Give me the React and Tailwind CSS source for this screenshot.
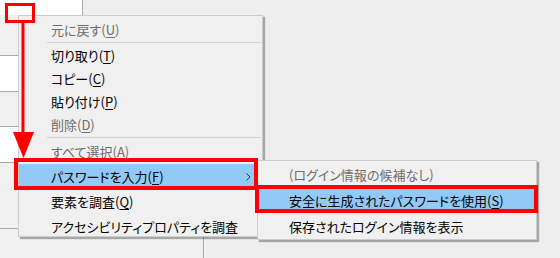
import React from "react";

const Item = ({ children, disabled, tall, active }) => (
  <div
    className={
      (tall ? "h-[25px] " : "h-[23px] ") +
      (active ? "bg-[#91c9f7] " : "") +
      (disabled ? "text-[#6d6d6d] " : "text-black ") +
      "flex items-center pl-[32px] pr-[10px] whitespace-nowrap"
    }
  >
    {children}
  </div>
);

const SubItem = ({ children, disabled, active }) => (
  <div
    className={
      (active ? "bg-[#91c9f7] " : "") +
      (disabled ? "text-[#6d6d6d] " : "text-black ") +
      "h-[26px] flex items-center pl-[31px] whitespace-nowrap"
    }
  >
    {children}
  </div>
);

const Sep = () => (
  <div className="h-[3px] flex items-center pl-[28px] pr-[1px]">
    <div className="h-px w-full bg-[#d2d2d2]" />
  </div>
);

const U = ({ children }) => <span className="underline underline-offset-2">{children}</span>;

export default function App() {
  return (
    <div className="relative w-[560px] h-[258px] overflow-hidden bg-[#eeeeee] font-['Noto_Sans_CJK_JP','Noto_Sans',sans-serif] text-[13px] leading-none [font-feature-settings:'palt']">
      {/* page background */}
      <div className="flex flex-col">
        <div className="flex h-[228px]">
          <div className="w-[83px] border-r border-[#a8a8a8] flex flex-col">
            <div className="h-[15px] bg-white" />
            <div className="h-[41px] bg-[#f0f0f0] border-b border-[#a8a8a8]" />
            <div className="h-[36px] bg-white border-b border-[#a8a8a8]" />
            <div className="h-[35px] bg-[#f0f0f0] border-b border-[#a8a8a8]" />
            <div className="h-[36px] bg-white border-b border-[#a8a8a8]" />
            <div className="flex-1 bg-[#f0f0f0]" />
          </div>
          <div className="flex-1" />
        </div>
        <div className="flex">
          <div className="w-[204px] h-[30px] border-t border-r border-[#a8a8a8] bg-[#f0f0f0]" />
        </div>
      </div>

      {/* main context menu */}
      <div className="absolute left-[18px] top-[15px] w-[245px] h-[222px] bg-[#f0f0f0] border border-[#cccccc] shadow-[2px_2px_1px_rgba(0,0,0,0.3)] pt-[2px]">
        <Item disabled>元に戻す(<U>U</U>)</Item>
        <Sep />
        <Item>切り取り(<U>T</U>)</Item>
        <Item>コピー(<U>C</U>)</Item>
        <Item>貼り付け(<U>P</U>)</Item>
        <Item disabled>削除(<U>D</U>)</Item>
        <Sep />
        <Item disabled tall>すべて選択(<U>A</U>)</Item>
        <div className="relative">
          <Item tall active>パスワードを入力(<U>F</U>)</Item>
          <svg className="absolute left-[227px] top-[9px]" width="5" height="8" viewBox="0 0 5 8">
            <polyline points="0.5,0.5 4,4 0.5,7.5" fill="none" stroke="#333333" strokeWidth="1" />
          </svg>
        </div>
        <Item tall>要素を調査(<U>Q</U>)</Item>
        <Item tall>アクセシビリティプロパティを調査</Item>
      </div>

      {/* submenu */}
      <div className="absolute left-[257px] top-[160px] w-[280px] h-[80px] bg-[#f0f0f0] border border-[#cccccc] shadow-[2px_2px_1px_rgba(0,0,0,0.3)]">
        <SubItem disabled>(ログイン情報の候補なし)</SubItem>
        <SubItem active>安全に生成されたパスワードを使用(<U>S</U>)</SubItem>
        <SubItem>保存されたログイン情報を表示</SubItem>
      </div>

      {/* annotations */}
      <div className="absolute left-[14px] top-[158px] w-[244px] h-[32px] border-4 border-[#ff0000]" />
      <div className="absolute left-[255px] top-[185px] w-[283px] h-[28px] border-4 border-[#ff0000]" />
      <svg className="absolute left-0 top-0" width="40" height="160" viewBox="0 0 40 160">
        <rect x="6.5" y="4.5" width="27" height="17" fill="none" stroke="#ff0000" strokeWidth="3" />
        <line x1="23" y1="22" x2="23" y2="134" stroke="#ff0000" strokeWidth="3" />
        <polygon points="13,132 34,132 23.5,158" fill="#ff0000" />
      </svg>
    </div>
  );
}
